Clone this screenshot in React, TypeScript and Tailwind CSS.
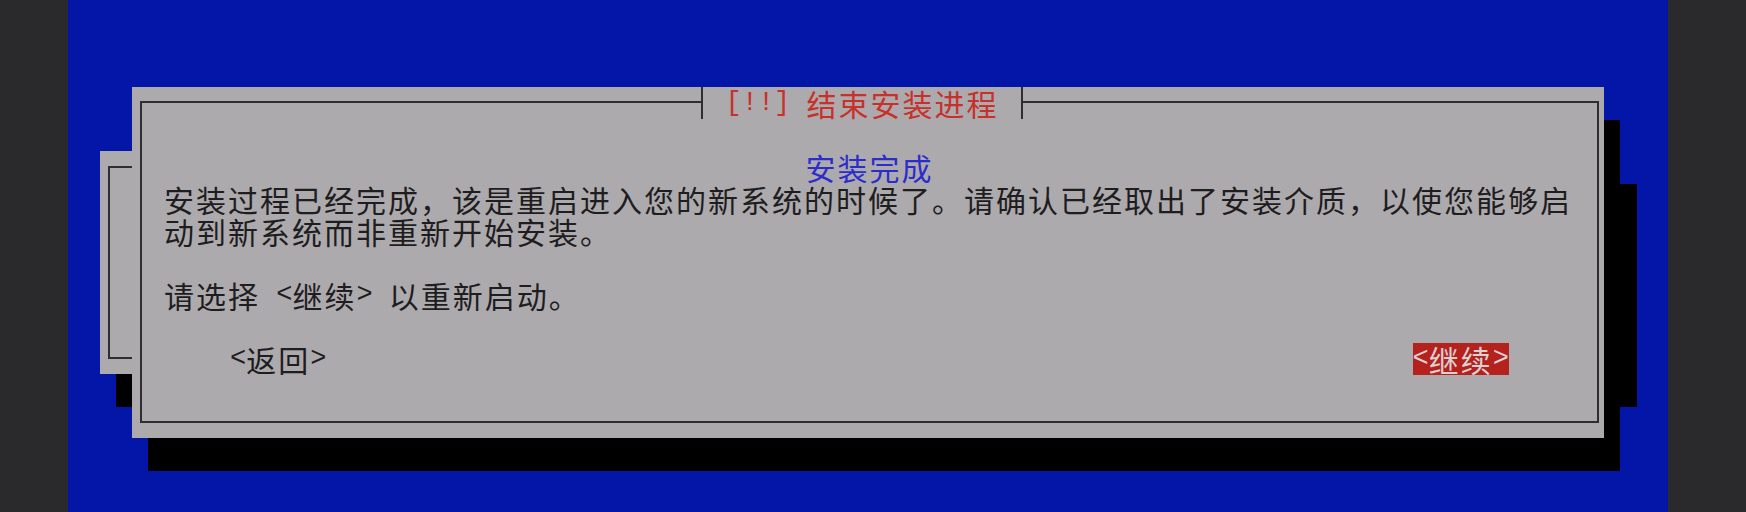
import React from 'react';

// 终端里的半角字符（< > [ ! 空格）占一个格子，宽度约为汉字的一半
const Mono = ({ children }: { children: React.ReactNode }) => (
  <span className="whitespace-pre font-['Liberation_Mono',monospace] text-[27px] tracking-normal">{children}</span>
);

const Button = ({ label, active }: { label: string; active?: boolean }) => (
  <span
    className={
      active
        ? 'inline-flex h-[32px] items-center bg-[#b5211d] text-[#d9d1d1]'
        : 'inline-flex h-[32px] items-center'
    }
  >
    <Mono>&lt;</Mono>
    <span className="tracking-[2px]">{label}</span>
    <Mono>&gt;</Mono>
  </span>
);

export default function App() {
  return (
    <div className="flex h-[512px] w-[1746px] overflow-hidden bg-[#2a292b] font-['Noto_Sans_CJK_SC',sans-serif] text-[30px] leading-[32px] tracking-[2px] text-[#1e1d20]">
      <div className="relative ml-[68px] h-full w-[1600px] bg-[#0416a8] pl-[64px] pt-[87px]">
        {/* 后面那个被挡住的对话框，右半边藏在前面的对话框下 */}
        <div className="absolute left-[32px] top-[151px] flex h-[223px] w-[1504px] bg-[#adaaae] pb-[15px] pl-[8px] pt-[15px] shadow-[16px_33px_0_0_#000,33px_33px_0_0_#000]">
          <div className="flex-1 border-2 border-[#2e2d30]" />
        </div>

        <div className="relative z-10 flex h-[351px] w-[1472px] flex-col bg-[#adaaae] pb-[15px] pl-[8px] pr-[5px] pt-[14px] shadow-[16px_33px_0_0_#000]">
          <div className="absolute left-[569px] top-0 flex h-[32px] w-[322px] items-center justify-center border-x-2 border-[#2e2d30] bg-[#adaaae] text-[#c8302a]">
            <Mono>[!!] </Mono>
            <span>结束安装进程</span>
          </div>

          <div className="flex flex-1 flex-col border-2 border-[#2e2d30] pt-[48px]">
            <div className="h-[32px] text-center text-[#2c2ccc]">安装完成</div>
            <div className="h-[32px] whitespace-nowrap pl-[22px]">
              安装过程已经完成，该是重启进入您的新系统的时候了。请确认已经取出了安装介质，以使您能够启
            </div>
            <div className="h-[32px] whitespace-nowrap pl-[22px]">动到新系统而非重新开始安装。</div>
            <div className="h-[32px]" />
            <div className="flex h-[32px] items-center whitespace-nowrap pl-[22px]">
              <span>请选择</span>
              <Mono> </Mono>
              <Button label="继续" />
              <Mono> </Mono>
              <span>以重新启动。</span>
            </div>
            <div className="h-[32px]" />
            <div className="flex h-[32px] items-center justify-between px-[88px]">
              <Button label="返回" />
              <Button label="继续" active />
            </div>
          </div>
        </div>
      </div>
    </div>
  );
}
